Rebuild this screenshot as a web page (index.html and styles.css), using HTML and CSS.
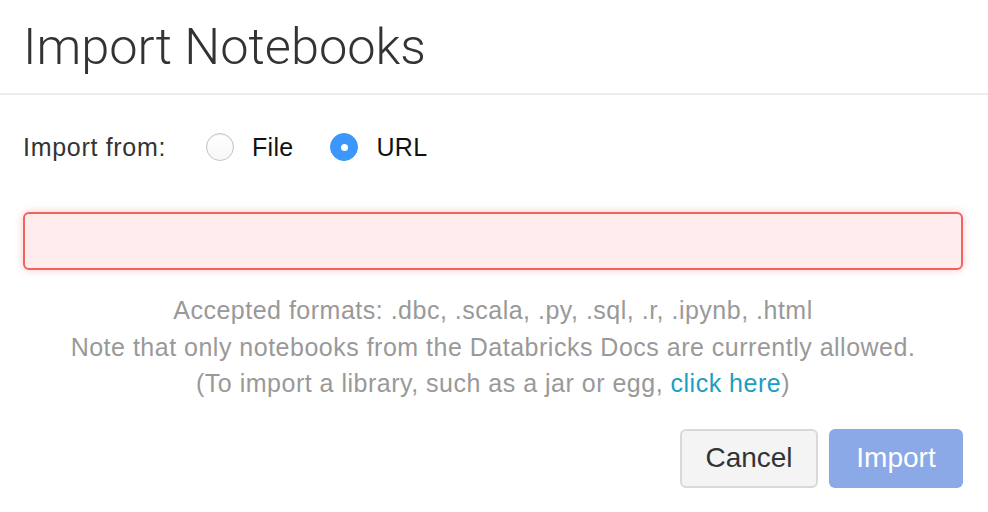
FILE: index.html
```html
<!DOCTYPE html>
<html>
<head>
<meta charset="utf-8">
<link rel="stylesheet" href="styles.css">
</head>
<body>
<div class="modal">
  <div class="modal-header">
    <h1 class="title">Import Notebooks</h1>
  </div>
  <div class="modal-body">
    <div class="import-row">
      <span class="label">Import from:</span>
      <label class="option"><span class="radio"></span><span class="opt-text">File</span></label>
      <label class="option"><span class="radio checked"></span><span class="opt-text">URL</span></label>
    </div>
    <div class="url-input"></div>
    <div class="help">
      <div>Accepted formats: .dbc, .scala, .py, .sql, .r, .ipynb, .html</div>
      <div>Note that only notebooks from the Databricks Docs are currently allowed.</div>
      <div>(To import a library, such as a jar or egg, <a class="link">click here</a>)</div>
    </div>
    <div class="actions">
      <button class="btn btn-cancel">Cancel</button>
      <button class="btn btn-import">Import</button>
    </div>
  </div>
</div>
</body>
</html>
```
FILE: styles.css
```css
html, body {
  margin: 0;
  padding: 0;
  background: #fff;
}
body {
  font-family: "Liberation Sans", Arial, sans-serif;
  color: #333;
}
.modal {
  width: 988px;
  height: 512px;
}
.modal-header {
  height: 93px;
  border-bottom: 2px solid #ececec;
  padding: 0 23px;
  display: flex;
  align-items: center;
}
.title {
  margin: 0;
  font-family: Roboto, "Liberation Sans", sans-serif;
  font-weight: 300;
  font-size: 50.5px;
  color: #333;
  line-height: 1;
  position: relative;
  top: 1px;
}
.modal-body {
  padding: 0 25px 0 23px;
}
.import-row {
  margin-top: 38px;
  height: 28px;
  display: flex;
  align-items: center;
  font-size: 25px;
  letter-spacing: 0.7px;
}
.label {
  color: #333;
  width: 143px;
  margin-right: 40px;
  white-space: nowrap;
}
.option {
  display: flex;
  align-items: center;
  margin-right: 37px;
  color: #111;
}
.opt-text {
  letter-spacing: 0.3px;
}
.radio {
  width: 26px;
  height: 26px;
  border-radius: 50%;
  border: 1px solid #c4c4c4;
  background: linear-gradient(#fff, #f7f7f7);
  box-shadow: inset 0 1px 1px rgba(0,0,0,0.08);
  margin-right: 18px;
  position: relative;
}
.radio.checked {
  border-color: #3b97fb;
  background: #3b97fb;
  box-shadow: none;
}
.radio.checked::after {
  content: "";
  position: absolute;
  width: 7px;
  height: 7px;
  border-radius: 50%;
  background: #fff;
  left: 9.5px;
  top: 9.5px;
}
.url-input {
  margin-top: 51px;
  height: 54px;
  border: 2px solid #f06360;
  border-radius: 6px;
  background: #ffecec;
  box-shadow: 0 0 8px rgba(240, 99, 96, 0.35);
}
.help {
  margin-top: 22px;
  text-align: center;
  font-size: 25px;
  letter-spacing: 0.5px;
  line-height: 36.5px;
  color: #999;
}
.link {
  color: #1a9ec3;
  text-decoration: none;
}
.actions {
  margin-top: 27px;
  display: flex;
  justify-content: flex-end;
  gap: 11px;
}
.btn {
  font-family: "Liberation Sans", Arial, sans-serif;
  font-size: 28px;
  height: 59px;
  border-radius: 6px;
  padding: 0;
}
.btn-cancel {
  width: 138px;
  background: #f4f4f4;
  border: 2px solid #d9d9d9;
  color: #333;
}
.btn-import {
  width: 134px;
  background: #8aa9e6;
  border: none;
  color: #fff;
}
```
